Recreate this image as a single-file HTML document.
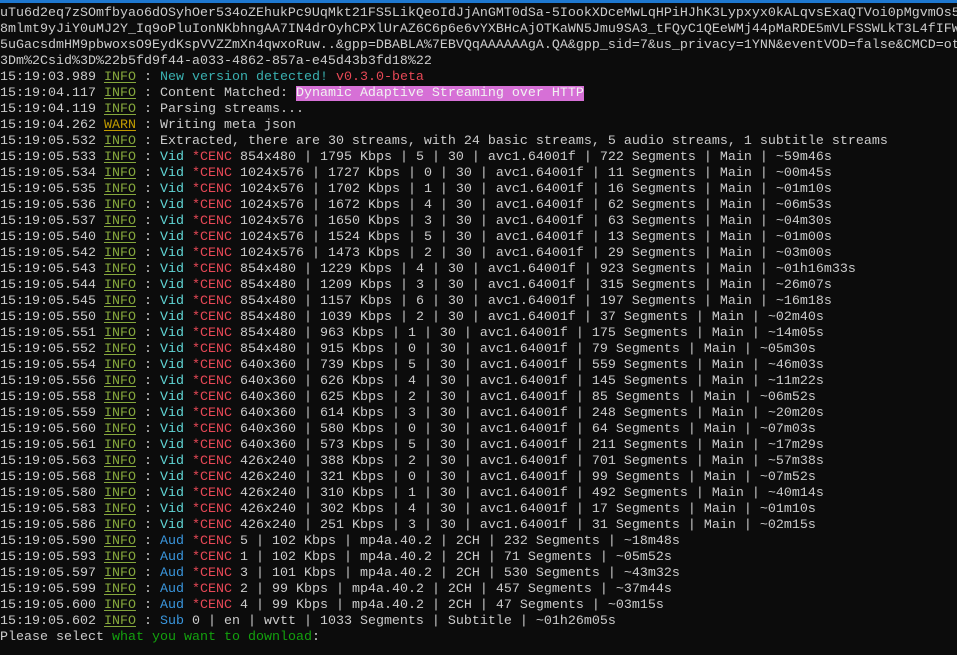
<!DOCTYPE html>
<html><head><meta charset="utf-8"><style>
html,body{margin:0;padding:0;background:#0c0c0c;width:957px;height:655px;overflow:hidden}
.top{position:absolute;left:0;top:0;width:957px;height:3px;background:#1e78d0}
pre{position:absolute;left:0;top:6px;margin:0;font-family:"Liberation Mono",monospace;font-size:13.33px;line-height:16px;color:#cccccc;white-space:pre}
.i{color:#86a83c;text-decoration:underline;text-underline-offset:2px}
.w{color:#c19c00;text-decoration:underline;text-underline-offset:2px}
.v{color:#61d6d6}
.a{color:#3a96dd}
.c{color:#e74856}
.t{color:#3ab0b0}
.h{background:#d670d6;color:#f2f2f2}
.g{color:#13a10e}
</style></head><body><div class="top"></div><pre>uTu6d2eq7zSOmfbyao6dOSyhOer534oZEhukPc9UqMkt21FS5LikQeoIdJjAnGMT0dSa-5IookXDceMwLqHPiHJhK3Lypxyx0kALqvsExaQTVoi0pMgvmOs5
8mlmt9yJiY0uMJ2Y_Iq9oPluIonNKbhngAA7IN4drOyhCPXlUrAZ6C6p6e6vYXBHcAjOTKaWN5Jmu9SA3_tFQyC1QEeWMj44pMaRDE5mVLFSSWLkT3L4fIFW
5uGacsdmHM9pbwoxsO9EydKspVVZZmXn4qwxoRuw..&amp;gpp=DBABLA%7EBVQqAAAAAAgA.QA&amp;gpp_sid=7&amp;us_privacy=1YNN&amp;eventVOD=false&amp;CMCD=ot%
3Dm%2Csid%3D%22b5fd9f44-a033-4862-857a-e45d43b3fd18%22
15:19:03.989 <span class="i">INFO</span> : <span class="t">New version detected!</span> <span class="c">v0.3.0-beta</span>
15:19:04.117 <span class="i">INFO</span> : Content Matched: <span class="h">Dynamic Adaptive Streaming over HTTP</span>
15:19:04.119 <span class="i">INFO</span> : Parsing streams...
15:19:04.262 <span class="w">WARN</span> : Writing meta json
15:19:05.532 <span class="i">INFO</span> : Extracted, there are 30 streams, with 24 basic streams, 5 audio streams, 1 subtitle streams
15:19:05.533 <span class="i">INFO</span> : <span class="v">Vid</span> <span class="c">*CENC</span> 854x480 | 1795 Kbps | 5 | 30 | avc1.64001f | 722 Segments | Main | ~59m46s
15:19:05.534 <span class="i">INFO</span> : <span class="v">Vid</span> <span class="c">*CENC</span> 1024x576 | 1727 Kbps | 0 | 30 | avc1.64001f | 11 Segments | Main | ~00m45s
15:19:05.535 <span class="i">INFO</span> : <span class="v">Vid</span> <span class="c">*CENC</span> 1024x576 | 1702 Kbps | 1 | 30 | avc1.64001f | 16 Segments | Main | ~01m10s
15:19:05.536 <span class="i">INFO</span> : <span class="v">Vid</span> <span class="c">*CENC</span> 1024x576 | 1672 Kbps | 4 | 30 | avc1.64001f | 62 Segments | Main | ~06m53s
15:19:05.537 <span class="i">INFO</span> : <span class="v">Vid</span> <span class="c">*CENC</span> 1024x576 | 1650 Kbps | 3 | 30 | avc1.64001f | 63 Segments | Main | ~04m30s
15:19:05.540 <span class="i">INFO</span> : <span class="v">Vid</span> <span class="c">*CENC</span> 1024x576 | 1524 Kbps | 5 | 30 | avc1.64001f | 13 Segments | Main | ~01m00s
15:19:05.542 <span class="i">INFO</span> : <span class="v">Vid</span> <span class="c">*CENC</span> 1024x576 | 1473 Kbps | 2 | 30 | avc1.64001f | 29 Segments | Main | ~03m00s
15:19:05.543 <span class="i">INFO</span> : <span class="v">Vid</span> <span class="c">*CENC</span> 854x480 | 1229 Kbps | 4 | 30 | avc1.64001f | 923 Segments | Main | ~01h16m33s
15:19:05.544 <span class="i">INFO</span> : <span class="v">Vid</span> <span class="c">*CENC</span> 854x480 | 1209 Kbps | 3 | 30 | avc1.64001f | 315 Segments | Main | ~26m07s
15:19:05.545 <span class="i">INFO</span> : <span class="v">Vid</span> <span class="c">*CENC</span> 854x480 | 1157 Kbps | 6 | 30 | avc1.64001f | 197 Segments | Main | ~16m18s
15:19:05.550 <span class="i">INFO</span> : <span class="v">Vid</span> <span class="c">*CENC</span> 854x480 | 1039 Kbps | 2 | 30 | avc1.64001f | 37 Segments | Main | ~02m40s
15:19:05.551 <span class="i">INFO</span> : <span class="v">Vid</span> <span class="c">*CENC</span> 854x480 | 963 Kbps | 1 | 30 | avc1.64001f | 175 Segments | Main | ~14m05s
15:19:05.552 <span class="i">INFO</span> : <span class="v">Vid</span> <span class="c">*CENC</span> 854x480 | 915 Kbps | 0 | 30 | avc1.64001f | 79 Segments | Main | ~05m30s
15:19:05.554 <span class="i">INFO</span> : <span class="v">Vid</span> <span class="c">*CENC</span> 640x360 | 739 Kbps | 5 | 30 | avc1.64001f | 559 Segments | Main | ~46m03s
15:19:05.556 <span class="i">INFO</span> : <span class="v">Vid</span> <span class="c">*CENC</span> 640x360 | 626 Kbps | 4 | 30 | avc1.64001f | 145 Segments | Main | ~11m22s
15:19:05.558 <span class="i">INFO</span> : <span class="v">Vid</span> <span class="c">*CENC</span> 640x360 | 625 Kbps | 2 | 30 | avc1.64001f | 85 Segments | Main | ~06m52s
15:19:05.559 <span class="i">INFO</span> : <span class="v">Vid</span> <span class="c">*CENC</span> 640x360 | 614 Kbps | 3 | 30 | avc1.64001f | 248 Segments | Main | ~20m20s
15:19:05.560 <span class="i">INFO</span> : <span class="v">Vid</span> <span class="c">*CENC</span> 640x360 | 580 Kbps | 0 | 30 | avc1.64001f | 64 Segments | Main | ~07m03s
15:19:05.561 <span class="i">INFO</span> : <span class="v">Vid</span> <span class="c">*CENC</span> 640x360 | 573 Kbps | 5 | 30 | avc1.64001f | 211 Segments | Main | ~17m29s
15:19:05.563 <span class="i">INFO</span> : <span class="v">Vid</span> <span class="c">*CENC</span> 426x240 | 388 Kbps | 2 | 30 | avc1.64001f | 701 Segments | Main | ~57m38s
15:19:05.568 <span class="i">INFO</span> : <span class="v">Vid</span> <span class="c">*CENC</span> 426x240 | 321 Kbps | 0 | 30 | avc1.64001f | 99 Segments | Main | ~07m52s
15:19:05.580 <span class="i">INFO</span> : <span class="v">Vid</span> <span class="c">*CENC</span> 426x240 | 310 Kbps | 1 | 30 | avc1.64001f | 492 Segments | Main | ~40m14s
15:19:05.583 <span class="i">INFO</span> : <span class="v">Vid</span> <span class="c">*CENC</span> 426x240 | 302 Kbps | 4 | 30 | avc1.64001f | 17 Segments | Main | ~01m10s
15:19:05.586 <span class="i">INFO</span> : <span class="v">Vid</span> <span class="c">*CENC</span> 426x240 | 251 Kbps | 3 | 30 | avc1.64001f | 31 Segments | Main | ~02m15s
15:19:05.590 <span class="i">INFO</span> : <span class="a">Aud</span> <span class="c">*CENC</span> 5 | 102 Kbps | mp4a.40.2 | 2CH | 232 Segments | ~18m48s
15:19:05.593 <span class="i">INFO</span> : <span class="a">Aud</span> <span class="c">*CENC</span> 1 | 102 Kbps | mp4a.40.2 | 2CH | 71 Segments | ~05m52s
15:19:05.597 <span class="i">INFO</span> : <span class="a">Aud</span> <span class="c">*CENC</span> 3 | 101 Kbps | mp4a.40.2 | 2CH | 530 Segments | ~43m32s
15:19:05.599 <span class="i">INFO</span> : <span class="a">Aud</span> <span class="c">*CENC</span> 2 | 99 Kbps | mp4a.40.2 | 2CH | 457 Segments | ~37m44s
15:19:05.600 <span class="i">INFO</span> : <span class="a">Aud</span> <span class="c">*CENC</span> 4 | 99 Kbps | mp4a.40.2 | 2CH | 47 Segments | ~03m15s
15:19:05.602 <span class="i">INFO</span> : <span class="a">Sub</span> 0 | en | wvtt | 1033 Segments | Subtitle | ~01h26m05s
Please select <span class="g">what you want to download</span>:</pre></body></html>
